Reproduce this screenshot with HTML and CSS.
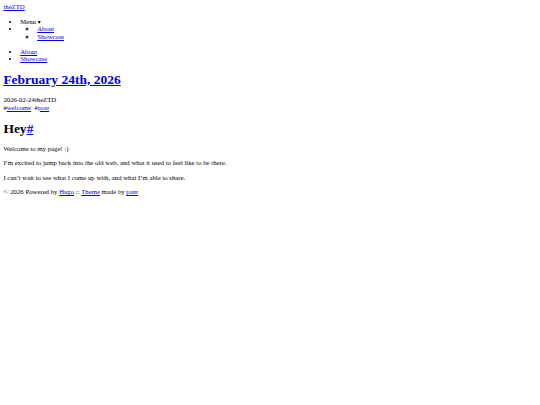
FILE: index.html
```html
<!DOCTYPE html>
<html lang="en">
	<head>
		<meta charset="UTF-8" />
		<meta name="viewport" content="width=device-width, initial-scale=1.0" />
		<title>February 24th, 2026 :: theZTD</title>
		<link rel="stylesheet" href="styles.css">
	</head>
	<body>
		<div class="container">
			<header class="header">
				<div class="header__logo">
					<a href="#" class="logo">theZTD</a>
				</div>
				<nav class="menu">
					<ul class="menu__inner">
						<li class="menu__trigger">Menu <span class="menu__arrow">▾</span></li>
						<li>
							<ul class="menu__dropdown">
								<li><a href="#">About</a></li>
								<li><a href="#">Showcase</a></li>
							</ul>
						</li>
					</ul>
					<ul class="menu__inner">
						<li><a href="#">About</a></li>
						<li><a href="#">Showcase</a></li>
					</ul>
				</nav>
			</header>

			<div class="content">
				<article class="post">
					<h1 class="post-title"><a href="#">February 24th, 2026</a></h1>
					<div class="post-meta"><time class="post-date">2026-02-24</time><span class="post-author">theZTD</span></div>
					<span class="post-tags">#<a href="#">welcome</a>&nbsp;
						#<a href="#">post</a>&nbsp;</span>
					<div class="post-content">
						<h1 id="hey">Hey<a href="#hey" class="hanchor">#</a></h1>
						<p>Welcome to my page! :)</p>
						<p>I’m excited to jump back into the old web, and what it used to feel like to be there.</p>
						<p>I can’t wait to see what I come up with, and what I’m able to share.</p>
					</div>
				</article>
			</div>

			<footer class="footer">
				<div class="copyright">
					<span>© 2026 Powered by <a href="#">Hugo</a></span>
					<span>:: <a href="#">Theme</a> made by <a href="#">panr</a></span>
				</div>
			</footer>
		</div>
	</body>
</html>
```

FILE: styles.css
```css
/* unstyled page, captured at 1280px and shrunk: 16px -> 6.75px */
body {
	margin: 3.375px;
	font-family: 'Liberation Serif', 'Times New Roman', serif;
	font-size: 6.75px;
	line-height: 1.135;
	color: #000000;
	background: #ffffff;
}
a {
	color: #0000ee;
}
ul {
	padding-left: 16.875px;
}
.menu__arrow {
	font-family: 'DejaVu Sans', sans-serif;
	font-size: 0.85em;
}
.post-tags {
	display: block;
}
```
